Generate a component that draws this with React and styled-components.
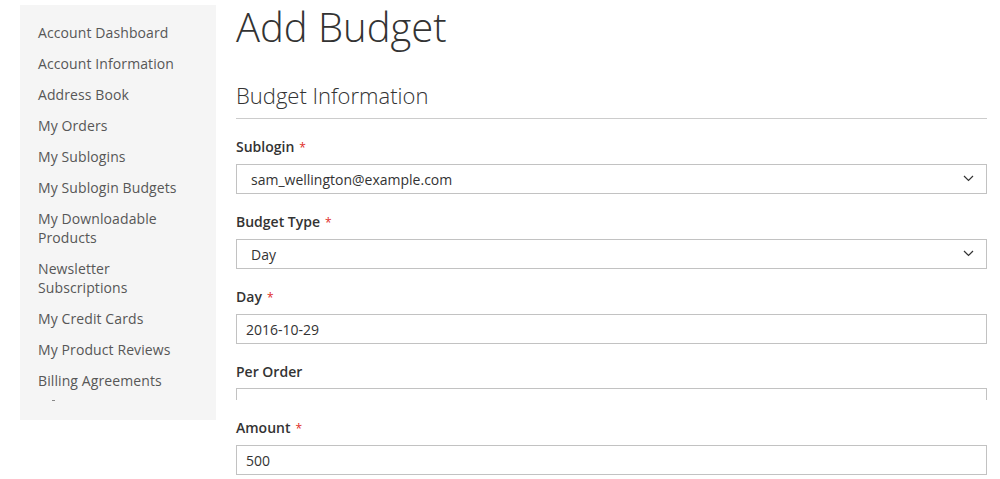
import styled, { createGlobalStyle } from 'styled-components';

const Global = createGlobalStyle`
  html, body {
    margin: 0;
    padding: 0;
    background: #fff;
    font-family: "Open Sans", "Liberation Sans", sans-serif;
    color: #333;
  }
`

const Page = styled.div`
  display: flex;
  align-items: flex-start;
  gap: 20px;
  padding-left: 20px;
  width: 1000px;
  height: 479px;
  box-sizing: border-box;
  overflow: hidden;
`

const Sidebar = styled.aside`
  width: 196px;
  flex: none;
  margin-top: 5px;
  height: 415px;
  box-sizing: border-box;
  background: #f5f5f5;
  padding: 18px 18px 0 18px;
`

const NavList = styled.ul`
  list-style: none;
  margin: 0;
  padding: 0;
`

const NavItem = styled.li`
  font-size: 14px;
  line-height: 19px;
  color: #575757;
  margin-bottom: 12px;
  letter-spacing: 0.1px;
`

const Delimiter = styled.li`
  width: 3px;
  height: 1px;
  margin: -2px 0 0 14px;
  background: #888;
`

const Main = styled.main`
  width: 751px;
  flex: none;
`

const Title = styled.h1`
  margin: 0;
  padding-top: 3px;
  font-size: 40px;
  line-height: 48px;
  font-weight: 300;
  color: #333;
`

const Legend = styled.h2`
  margin: 30px 0 0;
  padding-bottom: 9px;
  font-size: 22px;
  line-height: 28px;
  font-weight: 300;
  color: #333;
  border-bottom: 1px solid #ccc;
`

const Fields = styled.div`
  padding-top: 18px;
`

const Field = styled.div`
  margin-bottom: 18px;
`

const Label = styled.label`
  display: block;
  font-size: 14px;
  line-height: 19px;
  font-weight: 600;
  color: #333;
  margin-bottom: 7px;

  ${p => p.$required && `
    &::after {
      content: '*';
      color: #e02b27;
      font-size: 12px;
      margin-left: 5px;
      font-weight: 400;
    }
  `}
`

const Control = styled.div`
  position: relative;
  height: 30px;
  box-sizing: border-box;
  border: 1px solid #c2c2c2;
  background: #fff;
  display: flex;
  align-items: center;
  padding-left: ${p => (p.$select ? '14px' : '9px')};
  font-size: 14px;
  color: #333;
`

const Clip = styled.div`
  height: 12px;
  overflow: hidden;
`

const Chevron = styled.svg`
  position: absolute;
  right: 12px;
  top: 50%;
  margin-top: -4px;
`

const nav = [
  'Account Dashboard',
  'Account Information',
  'Address Book',
  'My Orders',
  'My Sublogins',
  'My Sublogin Budgets',
  'My Downloadable Products',
  'Newsletter Subscriptions',
  'My Credit Cards',
  'My Product Reviews',
  'Billing Agreements',
]

function Select({ value }) {
  return (
    <Control $select>
      {value}
      <Chevron width="11" height="7" viewBox="0 0 11 7">
        <path d="M1 1l4.5 4.5L10 1" fill="none" stroke="#333" strokeWidth="1.2" />
      </Chevron>
    </Control>
  )
}

export default function App() {
  return (
    <>
      <Global />
      <Page>
        <Sidebar>
          <NavList>
            {nav.map(n => <NavItem key={n}>{n}</NavItem>)}
            <Delimiter />
          </NavList>
        </Sidebar>
        <Main>
          <Title>Add Budget</Title>
          <Legend>Budget Information</Legend>
          <Fields>
            <Field>
              <Label $required>Sublogin</Label>
              <Select value="sam_wellington@example.com" />
            </Field>
            <Field>
              <Label $required>Budget Type</Label>
              <Select value="Day" />
            </Field>
            <Field>
              <Label $required>Day</Label>
              <Control>2016-10-29</Control>
            </Field>
            <Field>
              <Label>Per Order</Label>
              <Clip><Control /></Clip>
            </Field>
            <Field>
              <Label $required>Amount</Label>
              <Control>500</Control>
            </Field>
          </Fields>
        </Main>
      </Page>
    </>
  )
}
